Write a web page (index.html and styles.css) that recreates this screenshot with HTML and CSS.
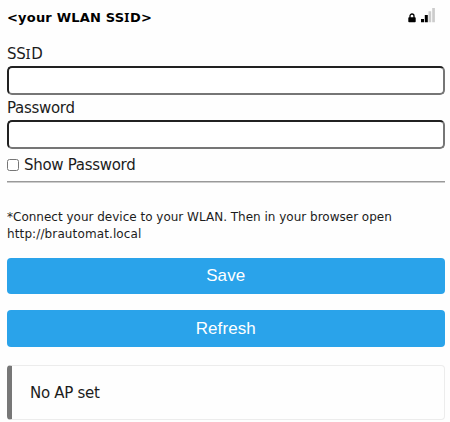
FILE: index.html
```html
<!DOCTYPE html>
<html lang="en">
<head>
<meta charset="utf-8">
<title>WLAN setup</title>
<link rel="stylesheet" href="styles.css">
</head>
<body>
<main class="page">
  <header class="network">
    <span class="network-name">&lt;your WLAN SS<span class="serif-i">I</span>D&gt;</span>
    <span class="status">
      <svg class="lock" viewBox="0 0 8 10" width="8" height="10"><path d="M2 5V3a2 2 0 0 1 4 0v2" fill="none" stroke="#000" stroke-width="1.3"/><rect x=".3" y="4.3" width="7.4" height="5" rx=".8"/></svg>
      <svg class="signal" viewBox="0 0 14 15" width="14" height="15"><path d="M0 11h3v3.3H0zM3.8 7h3v7.3h-3z"/><path d="M7.5 3.3h2.7v11H7.5zM11.2 0h2.7v14.3h-2.7z" fill="#ccc"/></svg>
    </span>
  </header>
  <form class="form">
    <label class="label" for="ssid">SS<span class="serif-i">I</span>D</label>
    <input class="field" id="ssid" type="text">
    <label class="label label-password" for="password">Password</label>
    <input class="field" id="password" type="password">
    <label class="toggle"><input class="check" type="checkbox"><span class="toggle-text">Show Password</span></label>
    <hr class="rule">
    <p class="hint"><span class="hint-line">*Connect your device to your WLAN. Then in your browser open</span> <span class="hint-line hint-url">http://brautomat.local</span></p>
    <button class="button save" type="button">Save</button>
    <button class="button refresh" type="button">Refresh</button>
  </form>
  <div class="message"><span class="message-text">No AP set</span></div>
</main>
</body>
</html>
```
FILE: styles.css
```css
* { box-sizing: border-box; }
body {
  margin: 0;
  background: #fefefe;
  color: #1c1c1c;
  font: 15px/18px Verdana, "DejaVu Sans", sans-serif;
  letter-spacing: -0.3px;
}
.page { padding: 8px 5.5px 0 7px; }
.network {
  display: flex;
  justify-content: space-between;
  height: 37px;
  padding-right: 9.5px;
  color: #000;
}
.network-name { font-size: 13px; font-weight: bold; line-height: 19px; letter-spacing: 0.2px; white-space: nowrap; }
.serif-i { font-family: "Noto Sans", sans-serif; line-height: 1; letter-spacing: 0.6px; }
.status { display: flex; align-items: flex-start; gap: 5px; }
.lock { margin-top: 5px; }
.form { display: flex; flex-direction: column; }
.label { height: 21px; line-height: 18px; }
.label-password { height: 25px; line-height: 26px; }
.field {
  width: 100%;
  height: 29px;
  margin: 0;
  border: 2px inset #767676;
  border-radius: 5px;
  background: #fff;
}
.toggle { display: flex; align-items: center; height: 32px; padding-bottom: 1px; }
.check { width: 12px; height: 12px; margin: 0 5px 0 0; }
.rule { width: 100%; height: 2px; margin: 0; border: 0; border-top: 1px solid #999; border-bottom: 1px solid #ccc; }
.hint { margin: 26px 0 0; height: 49px; font-size: 12px; line-height: 17px; letter-spacing: 0; }
.hint-line { display: inline-block; white-space: nowrap; }
.hint-url { letter-spacing: 0.12px; }
.button {
  height: 36px;
  padding: 0;
  border: 0;
  border-radius: 4px;
  background: #2aa3ea;
  color: #fff;
  font: 17px "Liberation Sans", Arial, sans-serif;
  letter-spacing: 0.1px;
}
.refresh { height: 37px; margin-top: 16px; }
.message {
  display: flex;
  align-items: center;
  height: 55px;
  margin-top: 18px;
  padding-left: 18px;
  border: 1px solid #ececec;
  border-left: 5px solid #777;
  border-radius: 4px;
}
```
